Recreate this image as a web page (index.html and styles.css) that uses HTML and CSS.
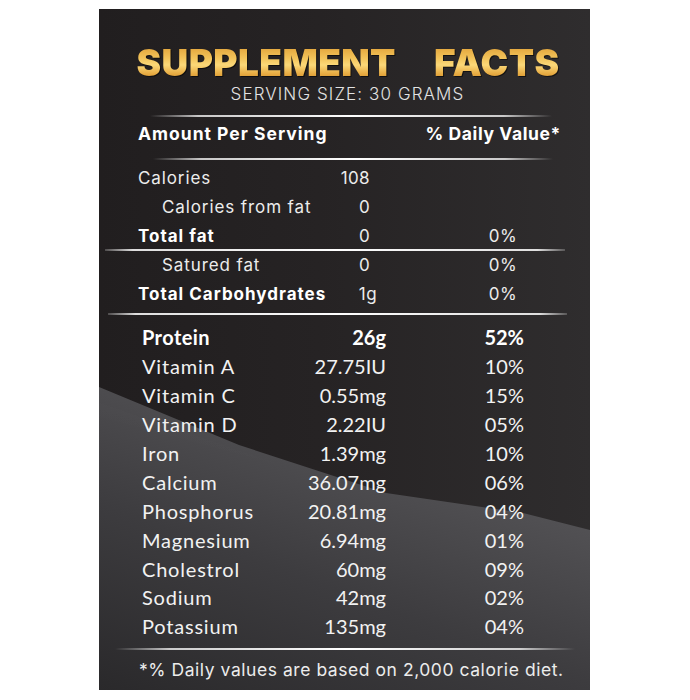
FILE: index.html
```html
<!DOCTYPE html>
<html lang="en">
<head>
<meta charset="utf-8">
<title>Supplement Facts</title>
<link rel="stylesheet" href="styles.css">
</head>
<body>
<div class="panel">
  <div class="content">
    <h1 class="title"><span>SUPPLEMENT</span><span>FACTS</span></h1>
    <p class="serving">SERVING SIZE: 30 GRAMS</p>
    <div class="rule rule--1"></div>
    <div class="head">
      <span>Amount Per Serving</span>
      <span>% Daily Value*</span>
    </div>
    <div class="rule rule--2"></div>
    <div class="basic">
      <div class="brow"><span class="lbl">Calories</span><span class="val">108</span><span class="pct"></span></div>
      <div class="brow"><span class="lbl lbl--indent">Calories from fat</span><span class="val">0</span><span class="pct"></span></div>
      <div class="brow brow--bold"><span class="lbl">Total fat</span><span class="val">0</span><span class="pct">0%</span></div>
      <div class="rule rule--3"></div>
      <div class="brow"><span class="lbl lbl--indent">Satured fat</span><span class="val">0</span><span class="pct">0%</span></div>
      <div class="brow brow--bold"><span class="lbl">Total Carbohydrates</span><span class="val val--over">1g</span><span class="pct">0%</span></div>
    </div>
    <div class="rule rule--4"></div>
    <div class="nutrients">
      <div class="nrow nrow--bold"><span class="nlbl">Protein</span><span class="nval">26g</span><span class="npct">52%</span></div>
      <div class="nrow"><span class="nlbl">Vitamin A</span><span class="nval">27.75IU</span><span class="npct">10%</span></div>
      <div class="nrow"><span class="nlbl">Vitamin C</span><span class="nval">0.55mg</span><span class="npct">15%</span></div>
      <div class="nrow"><span class="nlbl">Vitamin D</span><span class="nval">2.22IU</span><span class="npct">05%</span></div>
      <div class="nrow"><span class="nlbl">Iron</span><span class="nval">1.39mg</span><span class="npct">10%</span></div>
      <div class="nrow"><span class="nlbl">Calcium</span><span class="nval">36.07mg</span><span class="npct">06%</span></div>
      <div class="nrow"><span class="nlbl">Phosphorus</span><span class="nval">20.81mg</span><span class="npct">04%</span></div>
      <div class="nrow"><span class="nlbl">Magnesium</span><span class="nval">6.94mg</span><span class="npct">01%</span></div>
      <div class="nrow"><span class="nlbl">Cholestrol</span><span class="nval">60mg</span><span class="npct">09%</span></div>
      <div class="nrow"><span class="nlbl">Sodium</span><span class="nval">42mg</span><span class="npct">02%</span></div>
      <div class="nrow"><span class="nlbl">Potassium</span><span class="nval">135mg</span><span class="npct">04%</span></div>
    </div>
    <div class="rule rule--5"></div>
    <p class="foot">*% Daily values are based on 2,000 calorie diet.</p>
  </div>
</div>
</body>
</html>
```
FILE: styles.css
```css
* { box-sizing: border-box; }
html, body { margin: 0; padding: 0; background: #ffffff; }

.panel {
  position: relative;
  width: 491px;
  height: 681px;
  margin: 9px 0 0 99px;
  overflow: hidden;
  background: linear-gradient(90deg, #211e1f 0%, #262324 45%, #2f2d2e 100%);
  color: #f4f4f4;
}

.panel::before {
  content: "";
  position: absolute;
  left: 0;
  right: 0;
  top: 370px;
  bottom: 0;
  background: linear-gradient(200deg, #5e5d60 0%, #525154 30%, #3d3c3f 62%, #2a292b 100%);
  clip-path: polygon(0 8px, 140px 66px, 287px 114px, 424px 134px, 491px 151px, 491px 311px, 0 311px);
}

.panel::after {
  content: "";
  position: absolute;
  left: 0;
  right: 0;
  top: 370px;
  bottom: 0;
  background: linear-gradient(195deg, rgba(255,255,255,0.10) 0%, rgba(255,255,255,0) 40%);
  clip-path: polygon(0 24px, 491px 190px, 491px 240px, 0 60px);
  opacity: 0.6;
}

.content {
  position: relative;
  z-index: 1;
  display: flex;
  flex-direction: column;
  padding-top: 34px;
}

.title {
  margin: 0;
  display: flex;
  justify-content: center;
  gap: 38px;
  padding-left: 7px;
  font-family: Inter, "Liberation Sans", sans-serif;
  font-weight: 900;
  font-size: 37px;
  line-height: 40px;
  letter-spacing: 0.4px;
}
.title span {
  background: linear-gradient(180deg, #dd9a30 0%, #f2c35a 38%, #fbd878 55%, #e6a940 78%, #c4852a 100%);
  -webkit-background-clip: text;
  background-clip: text;
  color: transparent;
  filter: drop-shadow(1px 1px 0 rgba(0,0,0,0.55));
}

.serving {
  margin: 1px 0 0;
  text-align: center;
  padding-left: 6px;
  font-family: Inter, "Liberation Sans", sans-serif;
  font-weight: 300;
  font-size: 17px;
  line-height: 20px;
  letter-spacing: 1.1px;
  color: #e2e2e2;
}

.rule {
  height: 2px;
  background: linear-gradient(90deg, rgba(255,255,255,0) 0%, rgba(255,255,255,0.75) 12%, #ffffff 50%, rgba(255,255,255,0.75) 88%, rgba(255,255,255,0) 100%);
}
.rule--1 { margin: 11px 0 0 51px; width: 402px; }
.rule--2 { margin: 13px 0 0 54px; width: 400px; }
.rule--3 { margin: -1px 0 -1px 6px; width: 460px; background: linear-gradient(90deg, rgba(255,255,255,0.2) 0%, rgba(255,255,255,0.85) 6%, #ffffff 50%, rgba(255,255,255,0.85) 94%, rgba(255,255,255,0.2) 100%); }
.rule--4 { margin: 5px 0 0 9px; width: 459px; background: linear-gradient(90deg, rgba(255,255,255,0.2) 0%, rgba(255,255,255,0.85) 6%, #ffffff 50%, rgba(255,255,255,0.85) 94%, rgba(255,255,255,0.2) 100%); }
.rule--5 { margin: 7px 0 0 16px; width: 460px; }

.head {
  margin: 6px 0 0 39px;
  width: 422px;
  display: flex;
  justify-content: space-between;
  font-family: Inter, "Liberation Sans", sans-serif;
  font-weight: 700;
  font-size: 17.5px;
  line-height: 22px;
  letter-spacing: 1px;
  color: #ffffff;
}
.head span:last-child { letter-spacing: 0.6px; margin-right: -1px; }

.basic {
  margin-top: 3px;
  display: flex;
  flex-direction: column;
}
.brow {
  margin-left: 39px;
  width: 379px;
  display: grid;
  grid-template-columns: 172px 60px 147px;
  height: 29px;
  align-items: center;
  font-family: Inter, "Liberation Sans", sans-serif;
  font-weight: 400;
  font-size: 17px;
  letter-spacing: 0.9px;
  color: #ececec;
}
.brow--bold .lbl {
  font-weight: 700;
  color: #ffffff;
  letter-spacing: 1px;
}
.lbl { white-space: nowrap; }
.lbl--indent { padding-left: 24px; }
.val { text-align: right; letter-spacing: 0.4px; }
.val--over { margin-right: -7px; }
.pct { text-align: right; letter-spacing: 0.4px; }

.nutrients {
  margin-top: 8px;
  display: flex;
  flex-direction: column;
}
.nrow {
  margin-left: 43px;
  width: 382px;
  display: grid;
  grid-template-columns: 164px 80px 138px;
  height: 28.9px;
  align-items: center;
  font-family: Lato, "Liberation Sans", sans-serif;
  font-weight: 400;
  font-size: 20px;
  color: #f2f2f2;
}
.nlbl { letter-spacing: 0.8px; white-space: nowrap; }
.nrow--bold { font-weight: 700; color: #ffffff; }
.nrow--bold .nlbl { letter-spacing: 0.4px; }
.nval, .npct { text-align: right; }

.foot {
  margin: 9px 0 0;
  padding-left: 40px;
  font-family: Inter, "Liberation Sans", sans-serif;
  font-weight: 400;
  font-size: 17.5px;
  line-height: 22px;
  letter-spacing: 0.55px;
  color: #ececec;
  white-space: nowrap;
}
```
